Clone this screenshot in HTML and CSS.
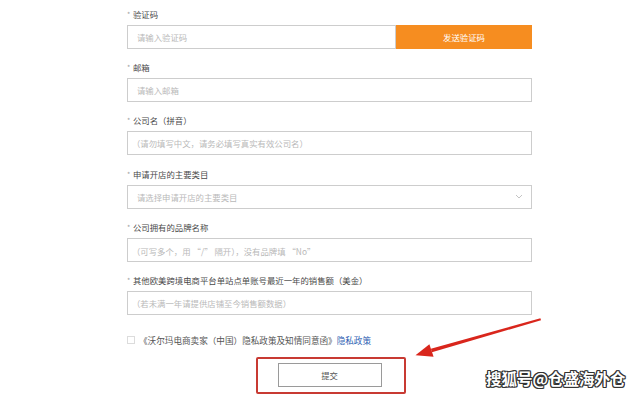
FILE: index.html
```html
<!DOCTYPE html>
<html lang="zh-CN">
<head>
<meta charset="utf-8">
<title>注册表单</title>
<link rel="stylesheet" href="styles.css">
</head>
<body>
<form class="form">
  <div class="field">
    <label class="label"><span class="star">*</span>验证码</label>
    <div class="code-row">
      <input class="control code-input" type="text" placeholder="请输入验证码">
      <button class="send-btn" type="button">发送验证码</button>
    </div>
  </div>
  <div class="field">
    <label class="label"><span class="star">*</span>邮箱</label>
    <input class="control" type="text" placeholder="请输入邮箱">
  </div>
  <div class="field">
    <label class="label"><span class="star">*</span>公司名（拼音）</label>
    <input class="control paren" type="text" placeholder="（请勿填写中文，请务必填写真实有效公司名）">
  </div>
  <div class="field">
    <label class="label"><span class="star">*</span>申请开店的主要类目</label>
    <div class="control select">
      <span class="select-ph">请选择申请开店的主要类目</span>
      <svg class="chev" width="8" height="5" viewBox="0 0 8 5"><path d="M1 1 L4 4 L7 1" fill="none" stroke="#c4c4c4" stroke-width="1"/></svg>
    </div>
  </div>
  <div class="field">
    <label class="label"><span class="star">*</span>公司拥有的品牌名称</label>
    <textarea class="control area paren" placeholder="（可写多个，用 “/” 隔开），没有品牌填 “No”"></textarea>
  </div>
  <div class="field">
    <label class="label"><span class="star">*</span>其他欧美跨境电商平台单站点单账号最近一年的销售额（美金）</label>
    <input class="control paren" type="text" placeholder="（若未满一年请提供店铺至今销售额数据）">
  </div>
  <div class="agree">
    <span class="box"></span>
    <span class="agree-text">《沃尔玛电商卖家（中国）隐私政策及知情同意函》<a class="link" href="#">隐私政策</a></span>
  </div>
  <button class="submit" type="button">提交</button>
</form>
<div class="highlight"></div>
<svg class="arrow" width="640" height="396" viewBox="0 0 640 396">
  <polygon points="540.4,318.2 541,320.2 431.9,352.2 430.9,348.8" fill="#d9261c"/>
  <polygon points="415.5,355.2 429.4,344.2 433.6,356.8" fill="#d9261c"/>
</svg>
<div class="watermark">搜狐号@仓盛海外仓</div>
</body>
</html>
```

FILE: styles.css
```css
html, body {
  margin: 0;
  padding: 0;
  background: #ffffff;
  width: 640px;
  height: 396px;
  overflow: hidden;
}
body {
  font-family: "Noto Sans CJK SC", "Noto Sans", sans-serif;
  font-size: 8.4px;
  color: #555555;
  position: relative;
}
.form {
  margin: 0 0 0 127px;
  padding-top: 8px;
  width: 405px;
  display: flex;
  flex-direction: column;
  gap: 12.2px;
}
.field {
  display: flex;
  flex-direction: column;
}
.label {
  height: 12px;
  line-height: 12px;
  margin-bottom: 5px;
  color: #4a4a4a;
  white-space: nowrap;
}
.star {
  color: #a0a0a0;
  display: inline-block;
  width: 6px;
  font-size: 7px;
  vertical-align: top;
}
.control {
  box-sizing: border-box;
  height: 24px;
  width: 100%;
  border: 1px solid #cdcdcd;
  background: #fff;
  margin: 0;
  padding: 0 0 0 9px;
  font-family: inherit;
  font-size: 8.4px;
  color: #555;
  outline: none;
  border-radius: 0;
}
.control.paren {
  padding-left: 4px;
}
.control::placeholder {
  color: #b9b9b9;
}
.code-row {
  display: flex;
}
.code-input {
  width: 269px;
  flex: none;
}
.send-btn {
  flex: 1;
  height: 24px;
  border: none;
  margin: 0;
  background: #f68d20;
  color: #ffffff;
  font-family: inherit;
  font-size: 8.4px;
  padding: 0;
}
.select {
  display: flex;
  align-items: center;
  justify-content: space-between;
  padding-right: 8px;
}
.select-ph {
  color: #b9b9b9;
}
.chev {
  display: block;
}
.area {
  resize: vertical;
  padding-top: 6px;
  line-height: 12px;
  display: block;
  overflow: hidden;
}
.area::-webkit-resizer {
  background: transparent;
}
.agree {
  margin-top: 7px;
  height: 12px;
  display: flex;
  align-items: center;
  gap: 4px;
  line-height: 12px;
}
.box {
  box-sizing: border-box;
  width: 8px;
  height: 8px;
  border: 1px solid #dcdcdc;
  background: #fff;
}
.agree-text {
  color: #555;
  white-space: nowrap;
  font-size: 8.6px;
}
.link {
  color: #2f5fb3;
  text-decoration: none;
}
.submit {
  align-self: center;
  margin-top: 5px;
  box-sizing: border-box;
  width: 104px;
  height: 24px;
  border: 1px solid #9a9a9a;
  background: #fff;
  color: #555;
  font-family: inherit;
  font-size: 8.4px;
  padding: 0;
}
.highlight {
  position: absolute;
  left: 256px;
  top: 357px;
  width: 150px;
  height: 37px;
  box-sizing: border-box;
  border: 2px solid #c83a33;
  border-radius: 2px;
}
.arrow {
  position: absolute;
  left: 0;
  top: 0;
  pointer-events: none;
}
.watermark {
  position: absolute;
  left: 486px;
  top: 368px;
  font-size: 15.5px;
  line-height: 20px;
  font-weight: bold;
  color: #ffffff;
  white-space: nowrap;
  text-shadow: 1px 1px 0 #333, -1px -1px 0 #333, 1px -1px 0 #333, -1px 1px 0 #333, 0 1px 0 #333, 0 -1px 0 #333, 1px 0 0 #333, -1px 0 0 #333;
}
```
